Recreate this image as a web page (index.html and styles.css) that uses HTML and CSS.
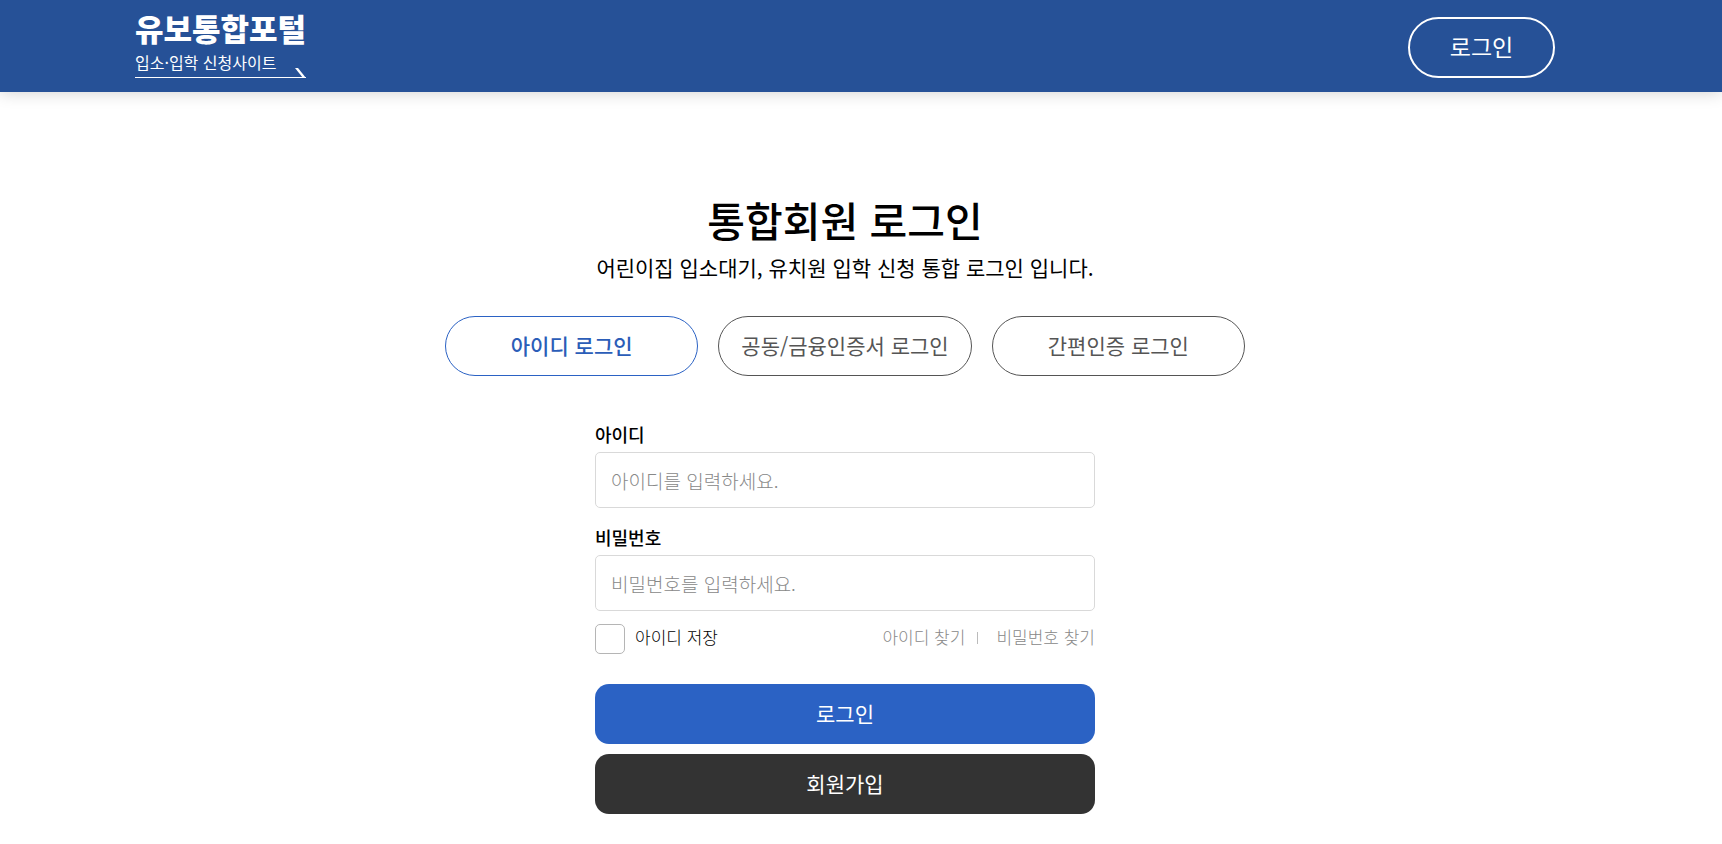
FILE: index.html
```html
<!DOCTYPE html>
<html lang="ko">
<head>
    <meta charset="UTF-8">
    <meta name="viewport" content="width=device-width, initial-scale=1.0">
    <title>유보통합포털 - 통합회원 로그인</title>
    <link rel="stylesheet" href="styles.css">
</head>
<body>
    <header class="header">
        <div class="header-inner">
            <a href="#" class="logo">
                <strong class="logo-name">유보통합포털</strong>
                <span class="logo-sub">입소·입학 신청사이트
                    <svg class="logo-tail" width="12" height="10" viewBox="0 0 12 10" aria-hidden="true">
                        <path d="M1 0h3l8 10H9z" fill="#fff"/>
                    </svg>
                </span>
            </a>
            <button type="button" class="header-login">로그인</button>
        </div>
    </header>

    <main class="container">
        <h1>통합회원 로그인</h1>
        <p class="intro">어린이집 입소대기, 유치원 입학 신청 통합 로그인 입니다.</p>

        <div class="tabs">
            <button type="button" class="tab active">아이디 로그인</button>
            <button type="button" class="tab">공동/금융인증서 로그인</button>
            <button type="button" class="tab">간편인증 로그인</button>
        </div>

        <form class="login-form">
            <label class="field-label" for="user-id">아이디</label>
            <input class="field" type="text" id="user-id" placeholder="아이디를 입력하세요.">

            <label class="field-label" for="user-pw">비밀번호</label>
            <input class="field" type="password" id="user-pw" placeholder="비밀번호를 입력하세요.">

            <div class="options">
                <input type="checkbox" id="save-id">
                <label for="save-id">아이디 저장</label>
                <div class="find-links">
                    <a href="#">아이디 찾기</a>
                    <a href="#">비밀번호 찾기</a>
                </div>
            </div>

            <button type="submit" class="btn btn-login">로그인</button>
            <button type="button" class="btn btn-join">회원가입</button>
        </form>
    </main>
</body>
</html>
```
FILE: styles.css
```css
* {
    box-sizing: border-box;
}

body {
    margin: 0;
    background-color: #fff;
    color: #000;
    font-family: "Noto Sans CJK KR", sans-serif;
    font-weight: 400;
}

button,
input {
    font-family: inherit;
    font-weight: inherit;
}

button {
    padding: 0 0 3px;
    cursor: pointer;
}

a {
    text-decoration: none;
}

/* header */
.header {
    padding-right: 32px;
    background-color: #265197;
    box-shadow: 0 0 16px rgba(0, 0, 0, 0.2);
}

.header-inner {
    display: flex;
    justify-content: space-between;
    max-width: 1420px;
    height: 92px;
    margin: 0 auto;
    padding-top: 17px;
}

.logo {
    display: flex;
    flex-direction: column;
    width: 171px;
    margin-top: -10px;
    color: #fff;
}

.logo-name {
    font-size: 31px;
    font-weight: 900;
    line-height: 42px;
    white-space: nowrap;
}

.logo-sub {
    position: relative;
    padding-bottom: 2px;
    border-bottom: 1px solid #fff;
    font-size: 16px;
    line-height: 26px;
}

.logo-tail {
    position: absolute;
    right: 0;
    bottom: -1px;
}

.header-login {
    width: 147px;
    height: 61px;
    border: 2px solid #fff;
    border-radius: 31px;
    background: none;
    color: #fff;
    font-size: 23px;
}

/* login */
.container {
    padding: 95px 32px 30px 0;
    text-align: center;
}

h1 {
    margin: 0;
    font-size: 41px;
    font-weight: 500;
    line-height: 64px;
}

.intro {
    margin: 0;
    font-size: 21px;
    line-height: 32px;
}

.tabs {
    display: grid;
    grid-template-columns: repeat(3, 1fr);
    gap: 20px;
    max-width: 800px;
    margin: 33px auto 44px;
}

.tab {
    height: 60px;
    border: 1px solid #555;
    border-radius: 30px;
    background-color: #fff;
    color: #555;
    font-size: 21px;
}

.tab.active {
    border-color: #2b62c4;
    color: #2b5db8;
    font-weight: 500;
}

.login-form {
    display: flex;
    flex-direction: column;
    max-width: 500px;
    margin: 0 auto;
    text-align: left;
}

.field-label {
    margin-bottom: 4px;
    font-size: 18px;
    font-weight: 500;
    line-height: 28px;
}

.field {
    height: 56px;
    margin-bottom: 15px;
    padding: 0 15px;
    border: 1px solid #d9d9d9;
    border-radius: 5px;
    font-size: 19px;
    font-weight: 300;
}

.field::placeholder {
    color: #888;
}

.options {
    display: flex;
    align-items: flex-start;
    margin: -2px 0 30px;
    font-size: 17px;
    font-weight: 300;
    line-height: 26px;
}

.options input {
    appearance: none;
    width: 30px;
    height: 30px;
    margin: 0 10px 0 0;
    border: 1px solid #b5b5b5;
    border-radius: 5px;
}

.options input:checked {
    background-color: #2b62c4;
}

.find-links {
    display: flex;
    margin-left: auto;
}

.find-links a {
    color: #888;
}

.find-links a + a::before {
    content: "";
    display: inline-block;
    width: 1px;
    height: 12px;
    margin: 0 18px 0 12px;
    background-color: #bbb;
}

.btn {
    height: 60px;
    border: 0;
    border-radius: 14px;
    color: #fff;
    font-size: 21px;
}

.btn-login {
    margin-bottom: 10px;
    background-color: #2b62c4;
}

.btn-join {
    background-color: #333;
}
```
